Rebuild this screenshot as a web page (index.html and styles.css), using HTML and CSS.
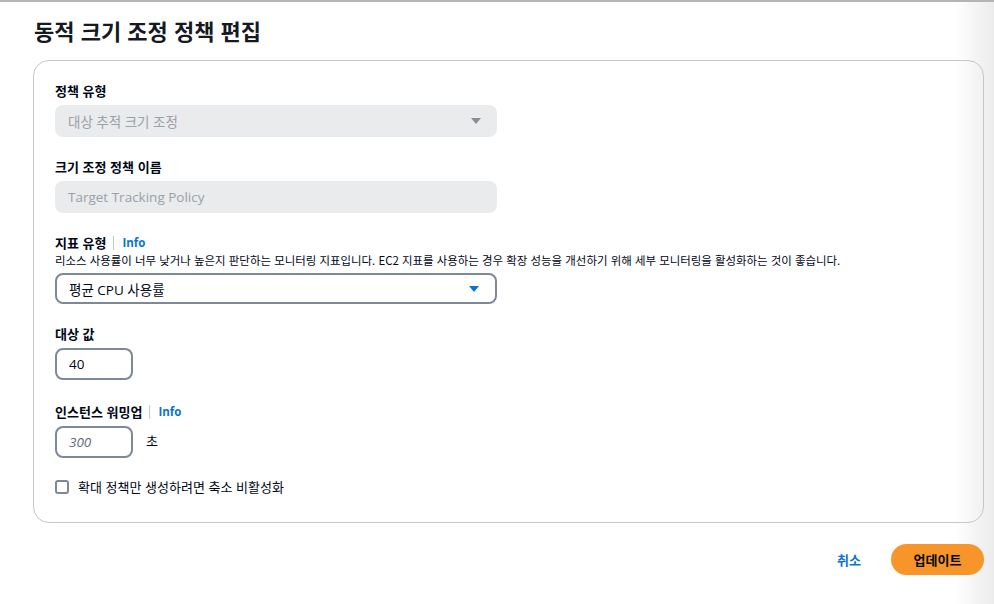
FILE: index.html
```html
<!DOCTYPE html>
<html lang="ko">
<head>
<meta charset="utf-8">
<link rel="stylesheet" href="styles.css">
</head>
<body>
<div class="page">
  <h1 class="title">동적 크기 조정 정책 편집</h1>
  <div class="card">
    <div class="field">
      <div class="label">정책 유형</div>
      <div class="select disabled wide">
        <span>대상 추적 크기 조정</span>
        <svg class="caret" width="12" height="8" viewBox="0 0 12 8"><path d="M1 1h10L6 7z" fill="#8c8c94"/></svg>
      </div>
    </div>
    <div class="field">
      <div class="label">크기 조정 정책 이름</div>
      <div class="input disabled wide"><span>Target Tracking Policy</span></div>
    </div>
    <div class="field">
      <div class="label">지표 유형 <span class="sep"></span><a class="info">Info</a></div>
      <div class="desc">리소스 사용률이 너무 낮거나 높은지 판단하는 모니터링 지표입니다. EC2 지표를 사용하는 경우 확장 성능을 개선하기 위해 세부 모니터링을 활성화하는 것이 좋습니다.</div>
      <div class="select active wide metric">
        <span>평균 CPU 사용률</span>
        <svg class="caret" width="12" height="8" viewBox="0 0 12 8"><path d="M1 1h10L6 7z" fill="#0972d3"/></svg>
      </div>
    </div>
    <div class="field target">
      <div class="label">대상 값</div>
      <div class="input active small"><span>40</span></div>
    </div>
    <div class="field">
      <div class="label">인스턴스 워밍업 <span class="sep"></span><a class="info">Info</a></div>
      <div class="inline">
        <div class="input active small"><span class="placeholder">300</span></div>
        <span class="unit">초</span>
      </div>
    </div>
    <div class="checkrow">
      <span class="checkbox"></span>
      <span>확대 정책만 생성하려면 축소 비활성화</span>
    </div>
  </div>
  <div class="actions">
    <a class="cancel">취소</a>
    <button class="primary">업데이트</button>
  </div>
</div>
</body>
</html>
```
FILE: styles.css
```css
html, body {
  margin: 0;
  padding: 0;
}
body {
  width: 994px;
  height: 604px;
  overflow: hidden;
  font-family: "Open Sans", "Noto Sans CJK KR", sans-serif;
  color: #000716;
  background: linear-gradient(to right, #ffffff 0, #ffffff 955px, #ebebeb 994px);
  border-top: 2px solid #b4b4b8;
  box-sizing: border-box;
}
.page {
  padding: 0 10px 0 33px;
}
.title {
  margin: 12px 0 0 1px;
  font-family: "Noto Sans CJK KR", sans-serif;
  font-size: 22px;
  line-height: 32px;
  font-weight: 700;
  color: #16191f;
}
.card {
  margin-top: 14px;
  width: 951px;
  height: 463px;
  box-sizing: border-box;
  border: 1px solid #c6c6cd;
  border-radius: 16px;
  padding: 20px 21px 0;
  display: flex;
  flex-direction: column;
  gap: 20px;
}
.field {
  display: flex;
  flex-direction: column;
}
.field.target { margin-bottom: 2px; }
.label {
  font-family: "Noto Sans CJK KR", sans-serif;
  font-size: 13px;
  font-weight: 700;
  line-height: 20px;
  margin-bottom: 4px;
  display: flex;
  align-items: center;
}
.sep {
  display: inline-block;
  width: 1px;
  height: 14px;
  background: #c6c6cd;
  margin: 0 8px 0 7px;
}
.info {
  font-family: "Open Sans", sans-serif;
  font-size: 11.5px;
  font-weight: 700;
  color: #0972d3;
}
.desc {
  font-family: "Noto Sans CJK KR", sans-serif;
  font-size: 11.45px;
  line-height: 16px;
  color: #000716;
  margin-top: -5px;
  margin-bottom: 5px;
  white-space: nowrap;
}
.select, .input {
  box-sizing: border-box;
  height: 32px;
  border-radius: 8px;
  display: flex;
  align-items: center;
  font-size: 13.5px;
  padding: 0 12px;
}
.select.metric { height: 31px; }
.wide { width: 442px; }
.small { width: 78px; }
.select { justify-content: space-between; }
.disabled {
  background: #e9ebed;
  color: #9ba0aa;
  padding-left: 13px;
}
.active {
  border: 2px solid #7d8998;
  background: #fff;
  color: #000716;
}
.caret { margin-right: 3px; }
.placeholder {
  font-style: italic;
  color: #5f6b7a;
}
.inline {
  display: flex;
  align-items: center;
  gap: 13px;
}
.unit {
  font-size: 13px;
  margin-top: -3px;
}
.checkrow {
  display: flex;
  align-items: center;
  gap: 9px;
  font-family: "Noto Sans CJK KR", sans-serif;
  font-size: 13px;
  line-height: 20px;
  margin-top: -1px;
}
.checkbox {
  width: 14px;
  height: 14px;
  box-sizing: border-box;
  border: 2px solid #7d8998;
  border-radius: 3px;
  background: #fff;
}
.actions {
  width: 951px;
  display: flex;
  justify-content: flex-end;
  align-items: center;
  gap: 30px;
  margin-top: 21px;
}
.cancel {
  font-family: "Noto Sans CJK KR", sans-serif;
  font-size: 13px;
  font-weight: 700;
  color: #0972d3;
}
.primary {
  width: 93px;
  height: 31px;
  border: none;
  border-radius: 16px;
  background: #f8952a;
  color: #000716;
  font-family: "Noto Sans CJK KR", sans-serif;
  font-size: 13px;
  font-weight: 700;
  padding: 0;
}
```
